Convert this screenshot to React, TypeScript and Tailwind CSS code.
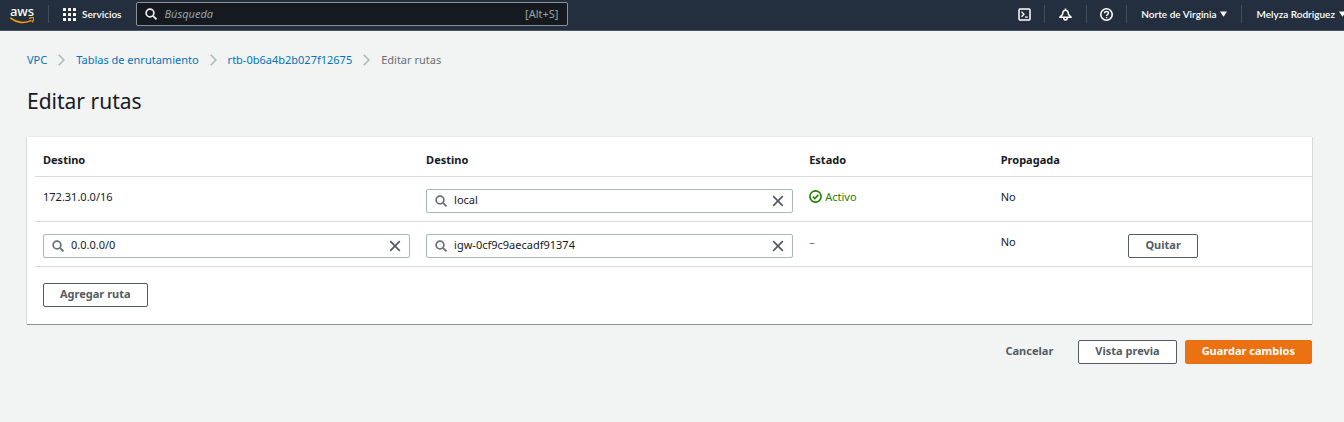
import type { ReactNode } from "react";

function SearchIcon({ className }: { className: string }) {
  return (
    <svg viewBox="0 0 12 12" className={className} fill="none" stroke="currentColor" strokeWidth="1.700" aria-hidden="true">
      <circle cx="5" cy="5" r="3.900" />
      <path d="m7.900 7.900 3.600 3.400" />
    </svg>
  );
}

function AwsLogo() {
  return (
    <a href="#" aria-label="AWS" className="flex w-6 flex-col items-center">
      <span className="font-['Noto_Sans'] text-[13px] leading-[12px] font-medium text-white">aws</span>
      <svg viewBox="0 0 24 7" className="h-[7px] w-6" fill="none" stroke="#ff9900" aria-hidden="true">
        <path d="M.2 1C6.500 6 15 6.800 21.500 3.400" strokeWidth="1.600" />
        <path d="M19 1.400c2-.7 4.300-.9 4.500-.4.300.7-.2 2.900-1.500 4.200" strokeWidth="1.300" />
      </svg>
    </a>
  );
}

function Divider() {
  return <span className="h-[18px] w-px shrink-0 bg-[#414d5c]" />;
}

function Caret() {
  return (
    <svg viewBox="0 0 8 6" className="h-[6px] w-[7px] shrink-0" fill="currentColor" aria-hidden="true">
      <path d="M0 0h8L4 6z" />
    </svg>
  );
}

function TopBar() {
  return (
    <header className="flex h-[31px] items-center overflow-hidden border-b border-[#4b5563] bg-[#232f3e] pb-[2px] pl-[10px] font-[Lato,'Noto_Sans',sans-serif] text-[10px] font-semibold text-white">
      <div className="flex flex-1 items-center">
        <AwsLogo />
        <span className="w-[14px]" />
        <Divider />
        <button type="button" className="mx-[14px] flex items-center gap-[6px]">
          <svg viewBox="0 0 13 13" className="size-[13px]" fill="currentColor" aria-hidden="true">
            {[0, 5, 10].map((y) => [0, 5, 10].map((x) => <rect key={`${x}-${y}`} x={x} y={y} width="3" height="3" rx=".5" />))}
          </svg>
          Servicios
        </button>
        <label className="flex h-6 w-[432px] items-center rounded-[2px] border border-[#879596] bg-[#16191f] px-2 font-['Noto_Sans',sans-serif]">
          <SearchIcon className="size-3 shrink-0 text-[#eaeded]" />
          <input
            type="search"
            aria-label="Búsqueda"
            placeholder="Búsqueda"
            className="min-w-0 flex-1 bg-transparent px-2 text-[11px] font-normal outline-none placeholder:text-[#95a5a6] placeholder:italic"
          />
          <span className="text-[11px] font-normal text-[#95a5a6]">[Alt+S]</span>
        </label>
      </div>
      <div className="flex shrink-0 items-center">
        <button type="button" aria-label="CloudShell" className="px-[13px]">
          <svg viewBox="0 0 13 13" className="size-[13px]" fill="none" stroke="currentColor" strokeWidth="1.500" aria-hidden="true">
            <rect x="1" y="1" width="11" height="11" rx="1" />
            <path d="m3.500 3.800 2.500 2.500-2.500 2.500M7 9.200h2.800" strokeWidth="1.300" />
          </svg>
        </button>
        <Divider />
        <button type="button" aria-label="Notificaciones" className="px-[14px]">
          <svg viewBox="0 0 13 13" className="size-[13px]" fill="none" stroke="currentColor" strokeWidth="1.500" strokeLinejoin="round" aria-hidden="true">
            <path d="M.8 9.200h11.400L9.500 6.500C9.300 3.700 8.300 2.300 6.500 2.300S3.700 3.700 3.500 6.500zM6.500.4v2M4.700 9.500c0 3.300 3.600 3.300 3.600 0" />
          </svg>
        </button>
        <Divider />
        <button type="button" aria-label="Ayuda" className="px-[13px]">
          <svg viewBox="0 0 13 13" className="size-[13px]" fill="none" stroke="currentColor" strokeWidth="1.600" aria-hidden="true">
            <circle cx="6.500" cy="6.500" r="5.700" />
            <path d="M4.600 5.200c0-2.400 3.900-2.300 3.900-.1C8.500 6.400 6.600 6.500 6.600 8M6.600 9v1.300" strokeWidth="1.400" />
          </svg>
        </button>
        <Divider />
        <button type="button" className="flex items-center gap-1 px-[14px] whitespace-nowrap">
          Norte de Virginia <Caret />
        </button>
        <Divider />
        <button type="button" className="-mr-[2px] flex items-center gap-1 pl-[14px] whitespace-nowrap">
          Melyza Rodriguez <Caret />
        </button>
      </div>
    </header>
  );
}

const crumbs = ["VPC", "Tablas de enrutamiento", "rtb-0b6a4b2b027f12675"];

function Breadcrumbs() {
  return (
    <nav aria-label="Ruta de navegación" className="flex h-4 items-center text-[11px]">
      {crumbs.map((crumb) => (
        <span key={crumb} className="flex items-center">
          <a href="#" className="text-[#0073bb]">{crumb}</a>
          <svg viewBox="0 0 7 12" className="mx-[11px] h-3 w-[7px]" fill="none" stroke="#aab7b8" strokeWidth="1.500" aria-hidden="true">
            <path d="m.7.7 5.200 5.300-5.200 5.300" />
          </svg>
        </span>
      ))}
      <span className="text-[#687078]">Editar rutas</span>
    </nav>
  );
}

function SearchField({ label, value }: { label: string; value: string }) {
  return (
    <div className="flex h-6 items-center rounded-[2px] border border-[#aab7b8] bg-white px-2">
      <SearchIcon className="size-3 shrink-0 text-[#687078]" />
      <input aria-label={label} defaultValue={value} className="min-w-0 flex-1 px-[7px] text-[11px] text-[#16191f] outline-none" />
      <button type="button" aria-label={`Borrar ${value}`} className="shrink-0">
        <svg viewBox="0 0 12 12" className="size-3" fill="none" stroke="#545b64" strokeWidth="1.700" aria-hidden="true">
          <path d="m1.200 1.200 9.600 9.600M10.800 1.200 1.200 10.800" />
        </svg>
      </button>
    </div>
  );
}

const buttonStyles = {
  normal: "border-[#545b64] bg-white text-[#545b64]",
  link: "border-transparent text-[#545b64]",
  primary: "border-[#ec7211] bg-[#ec7211] text-white",
};

function Button({ kind = "normal", children }: { kind?: keyof typeof buttonStyles; children: ReactNode }) {
  return (
    <button type="button" className={`flex h-6 items-center rounded-[2px] border px-4 text-[11px] font-bold whitespace-nowrap ${buttonStyles[kind]}`}>
      {children}
    </button>
  );
}

function RoutesTable() {
  const textCell = "px-2 pt-3 align-top leading-4";
  const fieldCell = "px-2 pt-3 pb-2 align-top";
  return (
    <table className="w-full table-fixed border-collapse text-left text-[11px]">
      <colgroup>
        <col className="w-[30%]" />
        <col className="w-[30%]" />
        <col className="w-[15%]" />
        <col className="w-[10%]" />
        <col className="w-[15%]" />
      </colgroup>
      <thead>
        <tr className="h-[39px] border-b border-[#d5dbdb]">
          <th className="px-2 pt-2 font-bold">Destino</th>
          <th className="px-2 pt-2 font-bold">Destino</th>
          <th className="px-2 pt-2 font-bold">Estado</th>
          <th className="px-2 pt-2 font-bold">Propagada</th>
          <th aria-label="Acciones" />
        </tr>
      </thead>
      <tbody>
        <tr className="border-b border-[#d5dbdb]">
          <td className={textCell}>172.31.0.0/16</td>
          <td className={fieldCell}><SearchField label="Destino de la ruta local" value="local" /></td>
          <td className={textCell}>
            <span className="flex items-center gap-[3px] text-[#1d8102]">
              <svg viewBox="0 0 13 13" className="size-[13px]" fill="none" stroke="currentColor" strokeWidth="1.600" aria-hidden="true">
                <circle cx="6.500" cy="6.500" r="5.600" />
                <path d="m3.800 6.500 2 2 3.600-3.600" />
              </svg>
              Activo
            </span>
          </td>
          <td className={textCell}>No</td>
          <td />
        </tr>
        <tr className="border-b border-[#d5dbdb]">
          <td className={fieldCell}><SearchField label="Bloque de destino" value="0.0.0.0/0" /></td>
          <td className={fieldCell}><SearchField label="Puerta de enlace" value="igw-0cf9c9aecadf91374" /></td>
          <td className={`${textCell} text-[#687078]`}>–</td>
          <td className={textCell}>No</td>
          <td className={fieldCell}><Button>Quitar</Button></td>
        </tr>
      </tbody>
    </table>
  );
}

export default function App() {
  return (
    <div className="min-h-screen bg-[#f2f3f3] font-['Noto_Sans',sans-serif] text-[#16191f]">
      <TopBar />
      <main className="pt-[21px] pr-8 pl-[27px]">
        <Breadcrumbs />
        <h1 className="mt-5 text-[21px] leading-[26px]">Editar rutas</h1>
        <section className="mt-[23px] bg-white pb-[17px] pl-2 shadow-[0_1px_0_#879596,1px_0_0_#d5dbdb,-1px_0_0_#d5dbdb,0_-1px_0_#eaeded]">
          <RoutesTable />
          <div className="mt-4 pl-2"><Button>Agregar ruta</Button></div>
        </section>
        <div className="mt-4 flex justify-end gap-2">
          <Button kind="link">Cancelar</Button>
          <Button>Vista previa</Button>
          <Button kind="primary">Guardar cambios</Button>
        </div>
      </main>
    </div>
  );
}
